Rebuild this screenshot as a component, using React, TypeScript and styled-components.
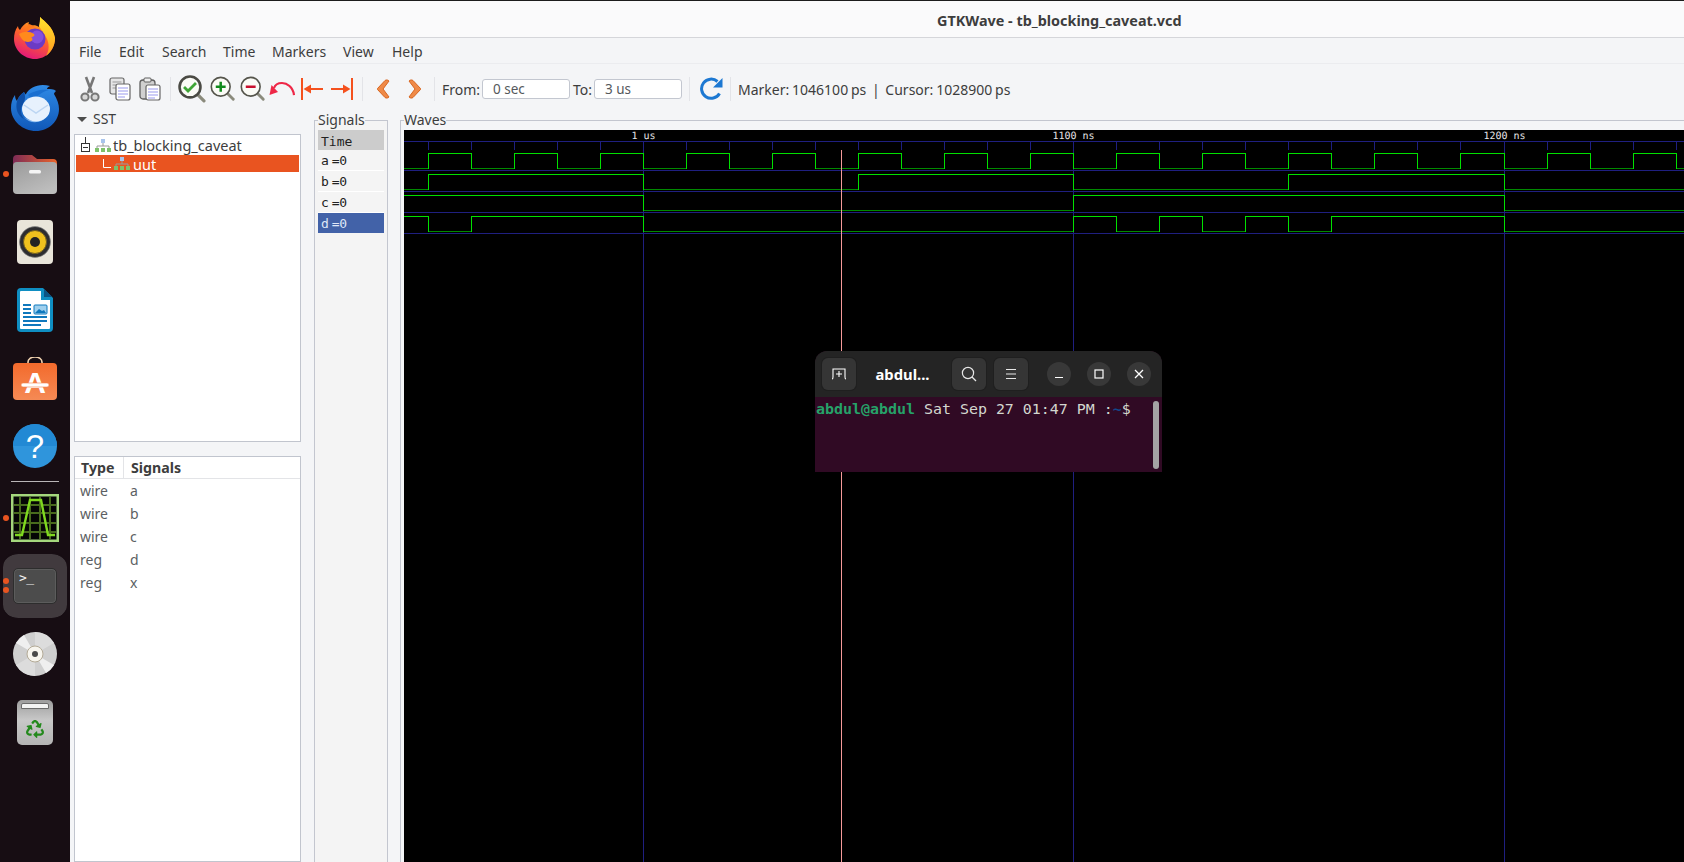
import React from 'react';
import styled, { createGlobalStyle } from 'styled-components';
import { FaRecycle } from 'react-icons/fa';

const GlobalStyle = createGlobalStyle`
  html, body {
    margin: 0;
    padding: 0;
    overflow: hidden;
    background: #f4f5f7;
  }
  * {
    box-sizing: border-box;
  }
`;

const UI_FONT = `"Noto Sans", "Open Sans", sans-serif`;
const MONO_FONT = `"DejaVu Sans Mono", "Liberation Mono", monospace`;

const Page = styled.div`
  position: relative;
  display: flex;
  width: 1684px;
  height: 862px;
  overflow: hidden;
  font-family: ${UI_FONT};
  color: #3d3d3d;
`;

/* ---------- dock ---------- */

const Dock = styled.aside`
  flex: 0 0 70px;
  display: flex;
  flex-direction: column;
  align-items: center;
  padding-top: 4px;
  background: #170d13;
`;

const DockItem = styled.div<{ $nudge?: number; $active?: boolean }>`
  position: relative;
  display: flex;
  align-items: center;
  justify-content: center;
  flex: 0 0 68px;
  width: 64px;
  padding-top: ${(p) => p.$nudge ?? 0}px;
  border-top: ${(p) => (p.$active ? 2 : 0)}px solid #170d13;
  border-bottom: ${(p) => (p.$active ? 2 : 0)}px solid #170d13;
  border-radius: 15px;
  background: ${(p) => (p.$active ? '#413a3e' : 'transparent')};
  background-clip: padding-box;
`;

const DockRule = styled.div`
  flex: 0 0 1px;
  width: 48px;
  margin: 1px 0 2px;
  background: #b9b5b7;
`;

const RunDot = styled.span<{ $top: number }>`
  position: absolute;
  left: 0;
  top: ${(p) => p.$top}px;
  width: 6px;
  height: 6px;
  border-radius: 50%;
  background: #e95420;
`;

const TerminalTile = styled.div`
  position: relative;
  width: 44px;
  height: 36px;
  padding: 1px 0 0 5px;
  border: 1px solid #2d2d2d;
  border-radius: 5px;
  background: #4c4c4c;
  box-shadow: 0 0 0 1px #5c5c5c inset;
  color: #f2f2f2;
  font: 13px ${MONO_FONT};
  line-height: 16px;
  letter-spacing: -0.5px;
`;

const TrashCan = styled.div`
  position: relative;
  display: flex;
  align-items: flex-end;
  justify-content: center;
  width: 36px;
  height: 45px;
  padding-bottom: 7px;
  border-radius: 5px;
  background: linear-gradient(#9d9d9d, #c8c8c8 45%, #b4b4b4);
  color: #23891c;
  font-size: 18px;
`;

const TrashLid = styled.span`
  position: absolute;
  left: 4px;
  right: 4px;
  top: 3px;
  height: 6px;
  border: 1px solid #6d6d6d;
  border-radius: 2px 2px 0 0;
  background: #f4f4f4;
`;

/* ---------- window chrome ---------- */

const Window = styled.main`
  flex: 1;
  display: flex;
  flex-direction: column;
  min-width: 0;
  background: #f4f5f7;
`;

const TitleBar = styled.header`
  flex: 0 0 38px;
  display: flex;
  align-items: center;
  padding: 2px 0 0 867px;
  border-top: 1px solid #1c1c1c;
  border-bottom: 1px solid #d5d6da;
  background: #fafafb;
  font-size: 14.4px;
  font-weight: 700;
  color: #3d3d3d;
`;

const MenuBar = styled.nav`
  flex: 0 0 26px;
  display: flex;
  align-items: center;
  padding-top: 2px;
  border-bottom: 1px solid #ebecef;
`;

const MenuItem = styled.span<{ $w: number }>`
  flex: 0 0 ${(p) => p.$w}px;
  font-size: 14px;
  &:first-child {
    margin-left: 9px;
  }
`;

const Toolbar = styled.div`
  flex: 0 0 46px;
  display: flex;
  align-items: center;
  padding: 4px 0 0 5px;
  font-size: 14px;
`;

const ToolSlot = styled.span<{ $w: number }>`
  flex: 0 0 ${(p) => p.$w}px;
  display: flex;
  align-items: center;
  justify-content: center;
`;

const ToolSep = styled.span<{ $l: number; $r: number }>`
  flex: 0 0 1px;
  height: 24px;
  margin: 0 ${(p) => p.$r}px 0 ${(p) => p.$l}px;
  background: #e3e4e8;
`;

const RangeInput = styled.input`
  flex: none;
  width: 88px;
  min-width: 0;
  height: 20px;
  margin: 0 3px 0 0;
  padding: 0 0 0 10px;
  border: 1px solid #c3c7d0;
  border-radius: 3px;
  outline: none;
  background: #fff;
  color: #55585c;
  font: 13.5px ${UI_FONT};
`;

const ToolLabel = styled.span<{ $w: number }>`
  flex: 0 0 ${(p) => p.$w}px;
  white-space: nowrap;
`;

const Status = styled.span`
  white-space: pre;
  word-spacing: -0.8px;
  font-size: 14px;
`;

/* ---------- panes ---------- */

const Panes = styled.div`
  flex: 1;
  display: flex;
  min-height: 0;
  overflow: hidden;
  padding-left: 4px;
`;

const SidePane = styled.section`
  flex: 0 0 227px;
  display: flex;
  flex-direction: column;
  margin-right: 13px;
`;

const SstHeader = styled.div`
  flex: 0 0 24px;
  display: flex;
  align-items: center;
  padding: 0 0 6px 3px;
  font-size: 14px;
  line-height: 18px;
`;

const Caret = styled.span`
  width: 0;
  height: 0;
  margin: 1px 6px 0 0;
  border-left: 5px solid transparent;
  border-right: 5px solid transparent;
  border-top: 5px solid #4d4d4d;
`;

const TreeBox = styled.div`
  flex: 0 0 308px;
  padding: 1px;
  border: 1px solid #c1c5ce;
  background: #fff;
`;

const TreeRow = styled.div<{ $selected?: boolean }>`
  position: relative;
  display: flex;
  align-items: center;
  height: ${(p) => (p.$selected ? 17 : 19)}px;
  padding-bottom: ${(p) => (p.$selected ? 0 : 1)}px;
  background: ${(p) => (p.$selected ? '#e95420' : 'transparent')};
  color: ${(p) => (p.$selected ? '#fff' : '#3d3d3d')};
  font-size: 14.5px;
`;

const TreeIcon = styled.svg<{ $left: number; $gap?: number }>`
  flex: none;
  margin-left: ${(p) => p.$left}px;
  margin-right: ${(p) => p.$gap ?? 3}px;
`;

const DeclBox = styled.div`
  flex: 1;
  margin-top: 14px;
  border: 1px solid #c1c5ce;
  background: #fff;
`;

const DeclHead = styled.div`
  display: flex;
  height: 22px;
  border-bottom: 1px solid #e3e4e7;
  font-size: 14.2px;
  font-weight: 700;
  line-height: 21px;
`;

const DeclHeadCell = styled.div<{ $w?: number }>`
  ${(p) => (p.$w ? `flex: 0 0 ${p.$w}px; border-right: 1px solid #e3e4e7; padding-left: 6px;` : 'flex: 1; padding-left: 7px;')}
`;

const DeclRow = styled.div`
  display: flex;
  height: 23px;
  align-items: center;
  color: #5c5f63;
  font-size: 14px;
`;

const DeclCell = styled.span<{ $w: number }>`
  flex: 0 0 ${(p) => p.$w}px;
  padding-left: 5px;
`;

const Frame = styled.fieldset<{ $w: number; $fill?: string }>`
  flex: 0 0 ${(p) => p.$w}px;
  height: 800px;
  min-width: 0;
  margin: 0 12px 0 0;
  padding: 0 3px;
  border: 1px solid #c3c6cf;
  background: ${(p) => p.$fill ?? 'transparent'};
`;

const FrameTitle = styled.legend`
  padding: 0;
  font-size: 14px;
  line-height: 20px;
`;

const SignalRow = styled.div<{ $tone?: 'head' | 'picked' }>`
  display: flex;
  align-items: center;
  height: 20px;
  margin-bottom: ${(p) => (p.$tone === 'head' ? 0 : 1)}px;
  padding: ${(p) => (p.$tone === 'head' ? '2px' : '1px')} 0 0 3px;
  background: ${(p) =>
    p.$tone === 'head' ? '#cccccc' : p.$tone === 'picked' ? '#4262a8' : '#f4f4f4'};
  box-shadow: 0 1px 0 ${(p) => (p.$tone ? 'transparent' : '#ffffff')};
  color: ${(p) => (p.$tone === 'picked' ? '#dfe7f7' : '#222')};
  font: 13px ${MONO_FONT};
`;

const SignalValue = styled.span`
  margin-left: 3px;
  letter-spacing: -0.5px;
`;

const WaveCanvas = styled.svg`
  display: block;
  background: #000;
`;

/* ---------- floating terminal ---------- */

const TermWindow = styled.div`
  position: absolute;
  left: 815px;
  top: 351px;
  width: 347px;
  height: 121px;
  display: flex;
  flex-direction: column;
  overflow: hidden;
  border-radius: 12px 12px 0 0;
  background: #300a24;
`;

const TermHeader = styled.div`
  flex: 0 0 46px;
  display: flex;
  align-items: center;
  padding-left: 7px;
  background: #242424;
  color: #fff;
`;

const TermButton = styled.span<{ $r?: number }>`
  flex: 0 0 34px;
  height: 32px;
  display: flex;
  align-items: center;
  justify-content: center;
  margin-right: ${(p) => p.$r ?? 0}px;
  border-radius: 6px;
  background: #353535;
  box-shadow: 0 0 0 1px #1f1f1f;
`;

const TermTitle = styled.span`
  flex: 0 0 96px;
  padding-right: 3px;
  text-align: center;
  font-size: 14.8px;
  font-weight: 700;
`;

const TermRound = styled.span<{ $r?: number }>`
  flex: 0 0 24px;
  height: 24px;
  display: flex;
  align-items: center;
  justify-content: center;
  margin-right: ${(p) => p.$r ?? 0}px;
  border-radius: 50%;
  background: #383838;
`;

const TermBody = styled.div`
  position: relative;
  flex: 1;
  padding: 3px 0 0 1px;
  color: #d3d7cf;
  font: 14.95px/18px ${MONO_FONT};
  white-space: pre;
`;

const PromptUser = styled.span`
  color: #26a269;
  font-weight: 700;
`;

const PromptPath = styled.span`
  color: #12488b;
  font-weight: 700;
`;

const TermScroll = styled.span`
  position: absolute;
  right: 3px;
  top: 4px;
  bottom: 3px;
  width: 6px;
  border-radius: 3px;
  background: #a3a3a3;
`;

/* ---------- waveform data ---------- */

const ORIGIN_X = 404;
const tick = (k: number) => Math.floor(428 + 43.04 * k) - ORIGIN_X + 0.5;
const KS = Array.from({ length: 30 }, (_, i) => i);

type Trace = { high: number; start: 0 | 1; flips: number[] };

const TRACES: Trace[] = [
  { high: 23, start: 0, flips: KS },
  { high: 44, start: 0, flips: [0, 5, 10, 15, 20, 25] },
  { high: 65, start: 1, flips: [5, 15, 25] },
  { high: 86, start: 1, flips: [0, 1, 5, 15, 16, 17, 18, 19, 20, 21, 25] },
];

const MAJOR = [
  { k: 5, label: '1 us' },
  { k: 15, label: '1100 ns' },
  { k: 25, label: '1200 ns' },
];

const WaveTrace = ({ high, start, flips }: Trace) => {
  const low = high + 15;
  const parts: React.ReactNode[] = [];
  let level = start;
  let from = 0;
  const stops = [...flips.map(tick), 1280];
  stops.forEach((x, i) => {
    const y = (level ? high : low) + 0.5;
    parts.push(
      <line key={`h${i}`} x1={from} x2={x} y1={y} y2={y} stroke={level ? '#00e000' : '#008a00'} />,
    );
    if (i < flips.length) {
      parts.push(<line key={`v${i}`} x1={x} x2={x} y1={high} y2={low + 1} stroke="#00e000" />);
    }
    level = level ? 0 : 1;
    from = x;
  });
  return <g>{parts}</g>;
};

const Waves = () => (
  <WaveCanvas width={1280} height={732} shapeRendering="crispEdges">
    {[11, 40, 61, 82, 103].map((y) => (
      <line key={y} x1={0} x2={1280} y1={y + 0.5} y2={y + 0.5} stroke="#1f1f80" />
    ))}
    {KS.map((k) => (
      <line key={k} x1={tick(k)} x2={tick(k)} y1={11} y2={20} stroke="#1f1f80" />
    ))}
    {MAJOR.map((m) => (
      <line key={m.k} x1={tick(m.k)} x2={tick(m.k)} y1={11} y2={732} stroke="#1f1f80" />
    ))}
    {TRACES.map((t) => (
      <WaveTrace key={t.high} {...t} />
    ))}
    <line x1={437.5} x2={437.5} y1={20} y2={732} stroke="#f59a9a" />
    {MAJOR.map((m) => (
      <text
        key={m.label}
        x={tick(m.k)}
        y={9}
        fill="#e8e8e8"
        fontFamily={MONO_FONT}
        fontSize={10}
        textAnchor="middle"
        textRendering="geometricPrecision"
      >
        {m.label}
      </text>
    ))}
  </WaveCanvas>
);

/* ---------- toolbar icons ---------- */

const Scissors = () => (
  <svg width="20" height="26" viewBox="0 0 20 26" fill="none" stroke="#777">
    <path d="M6 1l6 16M14 1L8 17" strokeWidth="2.6" />
    <circle cx="5" cy="21" r="3.6" strokeWidth="2" fill="#d8d8d8" />
    <circle cx="15" cy="21" r="3.6" strokeWidth="2" fill="#d8d8d8" />
  </svg>
);

const PageLines = ({ x, y }: { x: number; y: number }) => (
  <path
    d={`M${x} ${y}h10M${x} ${y + 3}h10M${x} ${y + 6}h10M${x} ${y + 9}h7`}
    stroke="#9a9aee"
    strokeWidth="1.2"
  />
);

const CopyIcon = () => (
  <svg width="22" height="24" viewBox="0 0 22 24" fill="none">
    <rect x="1" y="1" width="14" height="16" rx="2" fill="#e6e6e6" stroke="#666" strokeWidth="1.2" />
    <path d="M3.5 5h9M3.5 8h9M3.5 11h9" stroke="#999" />
    <rect x="7" y="7" width="14" height="16" rx="2" fill="#fff" stroke="#666" strokeWidth="1.2" />
    <PageLines x={9} y={11} />
  </svg>
);

const PasteIcon = () => (
  <svg width="22" height="24" viewBox="0 0 22 24" fill="none">
    <rect x="1" y="3" width="15" height="19" rx="3" fill="#d0d0d0" stroke="#5f5f5f" strokeWidth="1.3" />
    <rect x="5" y="1" width="7" height="4" rx="1" fill="#eee" stroke="#5f5f5f" />
    <rect x="7" y="8" width="14" height="15" rx="2" fill="#fff" stroke="#666" strokeWidth="1.2" />
    <PageLines x={9} y={12} />
  </svg>
);

const Lens = ({
  ring,
  size,
  weight,
  children,
}: {
  ring: string;
  size: number;
  weight: number;
  children: React.ReactNode;
}) => (
  <svg width={size} height={size * 0.93} viewBox="0 0 30 28" fill="none">
    <path d="M20 19l7 7" stroke="#8a8a7c" strokeWidth="3.2" strokeLinecap="round" />
    <circle cx="13" cy="12" r="10.5" fill="#fbfbf6" stroke={ring} strokeWidth={weight} />
    {children}
  </svg>
);

const TurnBack = () => (
  <svg width="26" height="16" viewBox="0 0 26 16" fill="none">
    <path d="M25 14C24 6 18 2 13 2 9 2 6 4 5 7" stroke="#ee2747" strokeWidth="2.2" />
    <path d="M0.5 14L9 11 2.5 4z" fill="#ee2747" />
  </svg>
);

const JumpEdge = ({ flip }: { flip?: boolean }) => (
  <svg
    width="24"
    height="22"
    viewBox="0 0 24 22"
    style={flip ? { transform: 'scaleX(-1)' } : undefined}
    fill="#f4511e"
  >
    <rect x="1" y="0" width="2" height="22" />
    <rect x="5" y="10" width="18" height="2" />
    <path d="M3.5 11L11 6.5v9z" />
  </svg>
);

const Chevron = ({ flip }: { flip?: boolean }) => (
  <svg
    width="14"
    height="20"
    viewBox="0 0 14 20"
    style={flip ? { transform: 'scaleX(-1)' } : undefined}
  >
    <path
      d="M9 1.5c1-1 3.5-.5 4 .5L7 10l6 8c-.5 1-3 1.500-4 .5L1.500 10.500c-.3-.3-.3-.7 0-1z"
      fill="#ef8a48"
      stroke="#d8651f"
    />
  </svg>
);

const Refresh = () => (
  <svg width="24" height="24" viewBox="0 0 24 24" fill="none">
    <path d="M19.5 16.5A9.6 9.6 0 1 1 17.5 4.5" stroke="#1c78d2" strokeWidth="3" />
    <path d="M22.5 1v9.5H13z" fill="#1c78d2" />
  </svg>
);

const HierIcon = ({ left, gap }: { left: number; gap?: number }) => (
  <TreeIcon $left={left} $gap={gap} width="16" height="13" viewBox="0 0 16 13">
    <rect x="6" y="0" width="4" height="4" fill="#a8c4ec" />
    <path d="M8 4v3M2 9V7h12v2" stroke="#9a9a9a" fill="none" />
    <rect x="0" y="9" width="4" height="4" fill="#7fc16b" />
    <rect x="6" y="9" width="4" height="4" fill="#7fc16b" />
    <rect x="12" y="9" width="4" height="4" fill="#7fc16b" />
  </TreeIcon>
);

/* ---------- dock icons ---------- */

const Firefox = () => (
  <svg width="42" height="44" viewBox="0 0 42 44">
    <defs>
      <linearGradient id="ffBody" x1="0.7" y1="0" x2="0.3" y2="1">
        <stop offset="0" stopColor="#ffb81f" />
        <stop offset="0.45" stopColor="#ff6a25" />
        <stop offset="1" stopColor="#e3147e" />
      </linearGradient>
      <linearGradient id="ffFlame" x1="0.5" y1="0" x2="0.5" y2="1">
        <stop offset="0" stopColor="#ffe52e" />
        <stop offset="1" stopColor="#ff9a1f" />
      </linearGradient>
    </defs>
    <path
      d="M26 1c5 5 13 10 15 21 0 12-9 21-20 21S0 34 0 23c0-5 1-9 4-13 0 2 1 3 2 4 2-4 5-7 9-8-1 2 0 3 1 4 3-1 6-1 9 1 1-4 1-7 1-10z"
      fill="url(#ffBody)"
    />
    <path d="M26 1c5 5 13 10 15 21 0 8-4 14-9 18 3-5 4-12 0-19-2-4-5-7-7-11 1-3 1-6 1-9z" fill="url(#ffFlame)" />
    <circle cx="21" cy="23" r="10.5" fill="#6b3bc4" />
    <circle cx="23" cy="21" r="6.5" fill="#8450dd" />
    <path d="M5 18c5-3 11-3 15 0 1 1 0 3-3 3 3 2 1 5-3 5-5 0-7-4-9-8z" fill="#ff8a1c" />
    <path d="M15 8c3 1 5 2 7 4-4-1-7 0-10 2 0-2 1-4 3-6z" fill="#ff7a1c" />
  </svg>
);

const Thunderbird = () => (
  <svg width="48" height="47" viewBox="0 0 48 47">
    <defs>
      <linearGradient id="tbBody" x1="0.5" y1="0" x2="0.5" y2="1">
        <stop offset="0" stopColor="#2f8ae6" />
        <stop offset="1" stopColor="#1058b8" />
      </linearGradient>
    </defs>
    <path
      d="M15 10c4-7 13-11 24-8-2 1-3 2-3 3 3 0 7 0 9 2-1 1-2 2-2 3 3 5 5 10 5 15 0 12-10 22-23 22S0 37 0 24c0-5 1-9 4-13 0 3 1 5 2 6 1-3 3-6 7-9 1 2 2 3 2 2z"
      fill="url(#tbBody)"
    />
    <path d="M13 8c2 5 1 9-2 14-2 4-1 9 2 13-6-3-9-10-7-18 1-4 4-7 7-9z" fill="#0d4ea6" />
    <path d="M17 11c5-4 14-6 21-5-7 2-13 6-15 11z" fill="#1a6fd0" />
    <path d="M13 33c6 5 15 5 23-1-4 7-17 9-23 1z" fill="#7db4ee" />
    <ellipse cx="25" cy="25" rx="14" ry="12.5" fill="#e7f1fd" />
    <path d="M13 21l12 8 12-8" fill="none" stroke="#bcd5f2" strokeWidth="1.5" />
  </svg>
);

const FilesIcon = () => (
  <svg width="44" height="40" viewBox="0 0 44 40">
    <defs>
      <linearGradient id="fdTop" x1="0" y1="0" x2="1" y2="0">
        <stop offset="0" stopColor="#7e2b56" />
        <stop offset="1" stopColor="#e9642b" />
      </linearGradient>
      <linearGradient id="fdBody" x1="0" y1="0" x2="0.6" y2="1">
        <stop offset="0" stopColor="#9a9a9a" />
        <stop offset="1" stopColor="#bdbdbd" />
      </linearGradient>
    </defs>
    <path d="M0 5a4 4 0 0 1 4-4h15l5 4h16a4 4 0 0 1 4 4v10H0z" fill="url(#fdTop)" />
    <rect x="0" y="8" width="44" height="32" rx="4" fill="url(#fdBody)" />
    <rect x="16" y="16" width="12" height="3.5" rx="1.5" fill="#f4f4f4" />
  </svg>
);

const SpeakerIcon = () => (
  <svg width="36" height="44" viewBox="0 0 36 44">
    <rect width="36" height="44" rx="4" fill="#e9e5da" />
    <circle cx="18" cy="22" r="15.5" fill="#2d2d30" stroke="#8a8a8a" strokeWidth="0.6" />
    <circle cx="18" cy="22" r="11.5" fill="#f0c11e" stroke="#6d5c20" />
    <circle cx="18" cy="22" r="5" fill="#232323" />
  </svg>
);

const WriterIcon = () => (
  <svg width="36" height="44" viewBox="0 0 36 44">
    <path d="M4 0h22l10 10v30a4 4 0 0 1-4 4H4a4 4 0 0 1-4-4V4a4 4 0 0 1 4-4z" fill="#0f8ec2" />
    <path d="M4 3h20v9h9v28a1 1 0 0 1-1 1H4a1 1 0 0 1-1-1V4a1 1 0 0 1 1-1z" fill="#fff" />
    <path d="M27 1l8 8h-8z" fill="#0b5585" />
    <g fill="#0f78bd">
      <rect x="6" y="16" width="8" height="2" />
      <rect x="6" y="20" width="8" height="2" />
      <rect x="6" y="24" width="8" height="2" />
      <rect x="6" y="28" width="24" height="2" />
      <rect x="6" y="32" width="24" height="2" />
      <rect x="6" y="36" width="18" height="2" />
    </g>
    <rect x="17" y="17" width="13" height="9" rx="1" fill="#9fd0ee" stroke="#0f78bd" />
    <path d="M18 25l4-4 3 2 2-1 2 3z" fill="#0f78bd" />
  </svg>
);

const StoreIcon = () => (
  <svg width="44" height="43" viewBox="0 0 44 43">
    <defs>
      <linearGradient id="bag" x1="0" y1="0" x2="0" y2="1">
        <stop offset="0" stopColor="#f36a2c" />
        <stop offset="1" stopColor="#f58a55" />
      </linearGradient>
    </defs>
    <path d="M15 7V5a7 5 0 0 1 14 0v2" fill="none" stroke="#f2d3b0" strokeWidth="1.6" />
    <rect x="0" y="6" width="44" height="37" rx="4" fill="url(#bag)" />
    <text x="22" y="36" textAnchor="middle" fill="#fff" fontFamily="'Liberation Sans', sans-serif" fontWeight="700" fontSize="30">
      A
    </text>
    <rect x="8" y="26" width="28" height="4" rx="2" fill="#fff" stroke="#f4824b" strokeWidth="0.6" />
  </svg>
);

const HelpIcon = () => (
  <svg width="44" height="44" viewBox="0 0 44 44">
    <circle cx="22" cy="22" r="22" fill="#2f95dc" />
    <path d="M0 22a22 22 0 0 1 44 0z" fill="#2289d4" />
    <text x="22" y="34" textAnchor="middle" fill="#fff" fontFamily="'Liberation Sans', sans-serif" fontSize="33">
      ?
    </text>
  </svg>
);

const WaveAppIcon = () => (
  <svg width="48" height="48" viewBox="0 0 48 48" fill="none">
    <rect width="48" height="48" fill="#a5d77d" />
    <rect x="2.500" y="2.500" width="43" height="43" fill="#050505" />
    <path
      d="M9 3v42M19 3v42M29 3v42M39 3v42M3 11h42M3 19h42M3 29h42M3 38h42"
      stroke="#486b1d"
      strokeWidth="2"
    />
    <path d="M4 41h7l8-35h11l7 35h7" stroke="#7fd81f" strokeWidth="2.4" />
  </svg>
);

const DiscIcon = () => (
  <svg width="44" height="44" viewBox="0 0 44 44">
    <circle cx="22" cy="22" r="22" fill="#cfcfcf" />
    <path d="M22 22L3 11a22 22 0 0 1 8-8zM22 22l19 11a22 22 0 0 1-8 8z" fill="#efefef" />
    <path d="M22 22V0a22 22 0 0 1 19 11zM22 22v22a22 22 0 0 1-19-11z" fill="#dcdcdc" />
    <circle cx="22" cy="22" r="8" fill="#f7f5ee" stroke="#b3aa96" />
    <circle cx="22" cy="22" r="3" fill="#4a4a4a" />
  </svg>
);

/* ---------- small terminal glyphs ---------- */

const NewTabGlyph = () => (
  <svg width="16" height="14" viewBox="0 0 16 14" fill="none" stroke="#fff" strokeWidth="1.1">
    <path d="M1 12c1 0 1-1 1-2V2h12v8c0 1 0 2 1 2M8 4v6M5 7h6" />
  </svg>
);

const SearchGlyph = () => (
  <svg width="16" height="16" viewBox="0 0 16 16" fill="none" stroke="#e8e8e8" strokeWidth="1.2">
    <circle cx="7" cy="7" r="5.6" />
    <path d="M11 11l4 4" />
  </svg>
);

const MenuGlyph = () => (
  <svg width="12" height="10" viewBox="0 0 12 10" stroke="#e8e8e8">
    <path d="M1 .5h10M1 5h10M1 9.5h10" />
  </svg>
);

const MinGlyph = () => (
  <svg width="10" height="10" viewBox="0 0 10 10" stroke="#fff" strokeWidth="1.2">
    <path d="M1 8.5h8" />
  </svg>
);

const MaxGlyph = () => (
  <svg width="10" height="10" viewBox="0 0 10 10" fill="none" stroke="#fff" strokeWidth="1.2">
    <rect x="1" y="1" width="8" height="8" />
  </svg>
);

const CloseGlyph = () => (
  <svg width="10" height="10" viewBox="0 0 10 10" stroke="#fff" strokeWidth="1.3">
    <path d="M1 1l8 8M9 1L1 9" />
  </svg>
);

/* ---------- page ---------- */

const MENUS: [string, number][] = [
  ['File', 40],
  ['Edit', 43],
  ['Search', 61],
  ['Time', 49],
  ['Markers', 71],
  ['View', 49],
  ['Help', 40],
];

const DECLS = [
  ['wire', 'a'],
  ['wire', 'b'],
  ['wire', 'c'],
  ['reg', 'd'],
  ['reg', 'x'],
];

const App = () => (
  <Page>
    <GlobalStyle />
    <Dock>
      <DockItem><Firefox /></DockItem>
      <DockItem $nudge={3}><Thunderbird /></DockItem>
      <DockItem>
        <RunDot $top={31} />
        <FilesIcon />
      </DockItem>
      <DockItem><SpeakerIcon /></DockItem>
      <DockItem><WriterIcon /></DockItem>
      <DockItem><StoreIcon /></DockItem>
      <DockItem><HelpIcon /></DockItem>
      <DockRule />
      <DockItem>
        <RunDot $top={31} />
        <WaveAppIcon />
      </DockItem>
      <DockItem $active>
        <RunDot $top={24} />
        <RunDot $top={33} />
        <TerminalTile>&gt;_</TerminalTile>
      </DockItem>
      <DockItem><DiscIcon /></DockItem>
      <DockItem>
        <TrashCan>
          <TrashLid />
          <FaRecycle />
        </TrashCan>
      </DockItem>
    </Dock>

    <Window>
      <TitleBar>GTKWave - tb_blocking_caveat.vcd</TitleBar>
      <MenuBar>
        {MENUS.map(([name, w]) => (
          <MenuItem key={name} $w={w}>{name}</MenuItem>
        ))}
      </MenuBar>
      <Toolbar>
        <ToolSlot $w={30}><Scissors /></ToolSlot>
        <ToolSlot $w={30}><CopyIcon /></ToolSlot>
        <ToolSlot $w={30}><PasteIcon /></ToolSlot>
        <ToolSep $l={5} $r={6} />
        <ToolSlot $w={30}>
          <Lens ring="#4a4a44" size={30} weight={2.6}>
            <path d="M7 12l4 4 8-8" stroke="#3fa535" strokeWidth="2.8" fill="none" />
          </Lens>
        </ToolSlot>
        <ToolSlot $w={30}>
          <Lens ring="#55554c" size={27} weight={1.8}>
            <path d="M13 6.500v11M7.500 12h11" stroke="#118a1c" strokeWidth="2.8" />
          </Lens>
        </ToolSlot>
        <ToolSlot $w={30}>
          <Lens ring="#55554c" size={27} weight={1.8}>
            <path d="M7.500 12h11" stroke="#c8102e" strokeWidth="2.8" />
          </Lens>
        </ToolSlot>
        <ToolSlot $w={30}><TurnBack /></ToolSlot>
        <ToolSlot $w={30}><JumpEdge /></ToolSlot>
        <ToolSlot $w={30}><JumpEdge flip /></ToolSlot>
        <ToolSep $l={5} $r={4} />
        <ToolSlot $w={32}><Chevron /></ToolSlot>
        <ToolSlot $w={32}><Chevron flip /></ToolSlot>
        <ToolSep $l={3} $r={7} />
        <ToolLabel $w={40}>From:</ToolLabel>
        <RangeInput readOnly value="0 sec" />
        <ToolLabel $w={21}>To:</ToolLabel>
        <RangeInput readOnly value="3 us" />
        <ToolSep $l={4} $r={10} />
        <ToolSlot $w={24}><Refresh /></ToolSlot>
        <ToolSep $l={6} $r={7} />
        <Status>Marker: 1046100 ps  |  Cursor: 1028900 ps</Status>
      </Toolbar>
      <Panes>
        <SidePane>
          <SstHeader>
            <Caret />
            SST
          </SstHeader>
          <TreeBox>
            <TreeRow>
              <TreeIcon $left={5} width="9" height="16" viewBox="0 0 9 16" fill="none" stroke="#333">
                <path d="M4.500 0v6" />
                <rect x="0.5" y="6.5" width="8" height="8" fill="#fff" />
                <path d="M2 10.500h5" />
              </TreeIcon>
              <HierIcon left={2} gap={2} />
              tb_blocking_caveat
            </TreeRow>
            <TreeRow $selected>
              <TreeIcon $left={27} width="8" height="10" viewBox="0 0 8 10" fill="none" stroke="#fff">
                <path d="M.5 0v8.500H8" />
              </TreeIcon>
              <HierIcon left={0} />
              uut
            </TreeRow>
          </TreeBox>
          <DeclBox>
            <DeclHead>
              <DeclHeadCell $w={49}>Type</DeclHeadCell>
              <DeclHeadCell>Signals</DeclHeadCell>
            </DeclHead>
            {DECLS.map(([type, name]) => (
              <DeclRow key={name}>
                <DeclCell $w={50}>{type}</DeclCell>
                <DeclCell $w={40}>{name}</DeclCell>
              </DeclRow>
            ))}
          </DeclBox>
        </SidePane>
        <Frame $w={74} $fill="#f4f4f4">
          <FrameTitle>Signals</FrameTitle>
          <SignalRow $tone="head">Time</SignalRow>
          {['a', 'b', 'c'].map((s) => (
            <SignalRow key={s}>
              {s}
              <SignalValue>=0</SignalValue>
            </SignalRow>
          ))}
          <SignalRow $tone="picked">
            d
            <SignalValue>=0</SignalValue>
          </SignalRow>
        </Frame>
        <Frame $w={1300}>
          <FrameTitle>Waves</FrameTitle>
          <Waves />
        </Frame>
      </Panes>
    </Window>

    <TermWindow>
      <TermHeader>
        <TermButton><NewTabGlyph /></TermButton>
        <TermTitle>abdul...</TermTitle>
        <TermButton $r={8}><SearchGlyph /></TermButton>
        <TermButton $r={19}><MenuGlyph /></TermButton>
        <TermRound $r={16}><MinGlyph /></TermRound>
        <TermRound $r={16}><MaxGlyph /></TermRound>
        <TermRound><CloseGlyph /></TermRound>
      </TermHeader>
      <TermBody>
        <PromptUser>abdul@abdul</PromptUser> Sat Sep 27 01:47 PM :<PromptPath>~</PromptPath>$
        <TermScroll />
      </TermBody>
    </TermWindow>
  </Page>
);

export default App;
